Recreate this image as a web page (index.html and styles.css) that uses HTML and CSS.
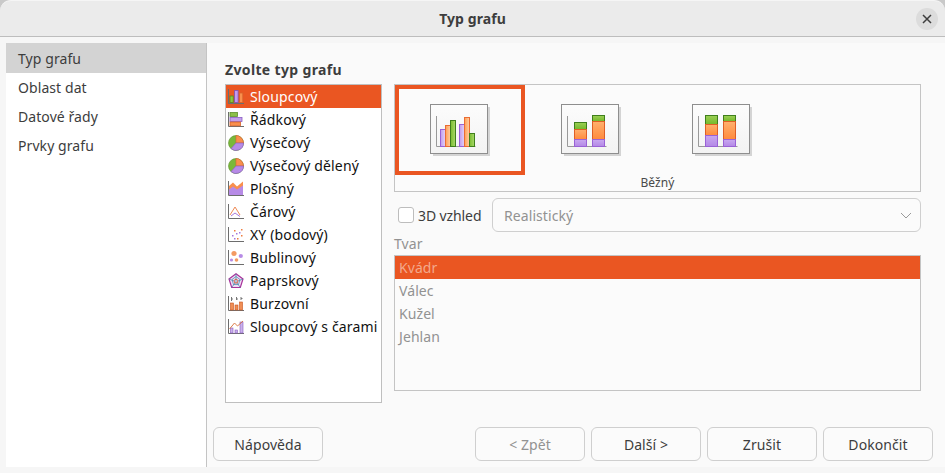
FILE: index.html
```html
<!DOCTYPE html>
<html lang="cs">
<head>
<meta charset="utf-8">
<title>Typ grafu</title>
<link rel="stylesheet" href="styles.css">
</head>
<body>
<svg class="defs" width="0" height="0" aria-hidden="true">
  <defs>
    <linearGradient id="gp" x1="0" x2="1" y1="0" y2="0"><stop offset="0" stop-color="#c09bec"/><stop offset="1" stop-color="#e3d2f7"/></linearGradient>
    <linearGradient id="go" x1="0" x2="1" y1="0" y2="0"><stop offset="0" stop-color="#ff9d55"/><stop offset="1" stop-color="#ffd0a5"/></linearGradient>
    <linearGradient id="gg" x1="0" x2="1" y1="0" y2="0"><stop offset="0" stop-color="#79bd2f"/><stop offset="1" stop-color="#a9d86a"/></linearGradient>
    <linearGradient id="vo" x1="0" x2="0" y1="0" y2="1"><stop offset="0" stop-color="#ffb06e"/><stop offset="1" stop-color="#ff8a3c"/></linearGradient>
    <linearGradient id="vg" x1="0" x2="0" y1="0" y2="1"><stop offset="0" stop-color="#9ccf55"/><stop offset="1" stop-color="#74b82a"/></linearGradient>
    <linearGradient id="vp" x1="0" x2="0" y1="0" y2="1"><stop offset="0" stop-color="#c9a8f0"/><stop offset="1" stop-color="#b388e6"/></linearGradient>
    <linearGradient id="fr" x1="0" x2="0" y1="0" y2="1"><stop offset="0" stop-color="#fcfcfc"/><stop offset="1" stop-color="#f3f3f3"/></linearGradient>
    <g id="frame">
      <rect x="3" y="3" width="57" height="49" fill="#d4d4d4"/>
      <rect x="0.500" y="0.500" width="57" height="49" fill="url(#fr)" stroke="#8e8e8e"/>
      <path d="M6.500 12v30.500h39" fill="none" stroke="#999"/>
    </g>
    <g id="pie">
      <circle cx="8" cy="8" r="7.500" fill="#79b83a" stroke="#5d8f2c" stroke-width=".6"/>
      <path d="M8 8V.5A7.500 7.500 0 0 1 15.500 8z" fill="#f98f4d" stroke="#d8622a" stroke-width=".6"/>
      <path d="M8 8h7.500A7.500 7.500 0 0 1 3 13.600z" fill="#b78be6" stroke="#8a5cc4" stroke-width=".6"/>
    </g>
    <path id="axes" d="M.500 0v14.500H16" fill="none" stroke="#6d6d6d"/>
  </defs>
</svg>
<div class="window">
  <header class="titlebar">
    <span class="title">Typ grafu</span>
    <span class="close"><svg width="10" height="10" viewBox="0 0 10 10"><path d="M1 1l8 8M9 1l-8 8" stroke="#3d3d3d" stroke-width="1.500" fill="none"/></svg></span>
  </header>
  <div class="body">
    <nav class="steps">
      <div class="step current">Typ grafu</div>
      <div class="step">Oblast dat</div>
      <div class="step">Datové řady</div>
      <div class="step">Prvky grafu</div>
    </nav>
    <main class="main">
      <h2 class="heading">Zvolte typ grafu</h2>
      <div class="content">
        <ul class="types">
          <li class="type selected"><svg class="ico" viewBox="0 0 16 16"><use href="#axes"/><rect x="2" y="7" width="3.200" height="6.500" fill="#8cc63f" stroke="#4f8a1f" stroke-width=".8"/><rect x="6.600" y="1.500" width="3.500" height="12" fill="#c39bee" stroke="#7d50b8" stroke-width=".8"/><rect x="11.600" y="4" width="3.200" height="9.500" fill="#f98f4d" stroke="#d8622a" stroke-width=".8"/></svg>Sloupcový</li>
          <li class="type"><svg class="ico" viewBox="0 0 16 16"><use href="#axes"/><rect x="2" y=".5" width="7.500" height="4" fill="#8cc04a" stroke="#5d8f2c" stroke-width=".8"/><rect x="2" y="5.500" width="12" height="4" fill="#c3a0ec" stroke="#8a5cc4" stroke-width=".8"/><rect x="2" y="10" width="10.500" height="3.800" fill="#f98f4d" stroke="#d8622a" stroke-width=".8"/></svg>Řádkový</li>
          <li class="type"><svg class="ico" viewBox="0 0 16 16"><use href="#pie"/></svg>Výsečový</li>
          <li class="type"><svg class="ico" viewBox="0 0 16 16"><use href="#pie"/></svg>Výsečový dělený</li>
          <li class="type"><svg class="ico" viewBox="0 0 16 16"><use href="#axes"/><path d="M1 6l4-3 4 4 6-5v12H1z" fill="#b78be6"/><path d="M1 5l4-3.500 4 4 6-5v4l-6 4-4-3-4 3z" fill="#f98f4d"/></svg>Plošný</li>
          <li class="type"><svg class="ico" viewBox="0 0 16 16"><use href="#axes"/><path d="M2 11l5-8 5 8" fill="none" stroke="#ee8a55"/><path d="M3 12l4-3 5 3.500" fill="none" stroke="#a678dc"/></svg>Čárový</li>
          <li class="type"><svg class="ico" viewBox="0 0 16 16"><use href="#axes"/><g fill="#ee7d3f"><rect x="6" y="3" width="1.500" height="1.500"/><rect x="13" y="2" width="1.500" height="1.500"/><rect x="13" y="8" width="1.500" height="1.500"/><rect x="9" y="11" width="1.500" height="1.500"/></g><g fill="#a678dc"><rect x="4" y="8" width="1.500" height="1.500"/><rect x="8" y="6" width="1.500" height="1.500"/><rect x="11" y="5" width="1.500" height="1.500"/><rect x="6" y="11" width="1.500" height="1.500"/></g></svg>XY (bodový)</li>
          <li class="type"><svg class="ico" viewBox="0 0 16 16"><use href="#axes"/><circle cx="6" cy="3.500" r="2.600" fill="#f39a62"/><circle cx="12.800" cy="6" r="2.100" fill="#b78be6"/><circle cx="3.500" cy="10" r="1.600" fill="#b78be6"/><circle cx="8.500" cy="10" r="1.800" fill="#f39a62"/></svg>Bublinový</li>
          <li class="type"><svg class="ico" viewBox="0 0 16 16"><path d="M8 .8l7 5.200-2.700 8.500H3.700L1 6z" fill="#f0dcf5" stroke="#a8329a" stroke-width="1.200"/><path d="M8 3.500l4 3-1.500 5h-5L4 6.500zM8 1v9M1 6l5 2M15 6l-5 2M3.700 14.500L7 10M12.300 14.500L9 10" fill="none" stroke="#3f86a8" stroke-width=".7"/><path d="M8 6l2 1.500-.8 2.500H6.800L6 7.500z" fill="none" stroke="#d0522a" stroke-width=".8"/></svg>Paprskový</li>
          <li class="type"><svg class="ico" viewBox="0 0 16 16"><use href="#axes"/><path d="M3.500 1v4M8.500 1v3M13 1v3M3.500 3h1.500M8.500 3h1.500M13 2.500h1.500" stroke="#777" fill="none"/><g fill="#f08e55" stroke="#c9541f" stroke-width=".6"><rect x="2.500" y="7" width="3" height="7"/><rect x="7" y="9" width="3" height="5"/><rect x="11.500" y="6" width="3" height="8"/></g></svg>Burzovní</li>
          <li class="type"><svg class="ico" viewBox="0 0 16 16"><use href="#axes"/><g fill="#c9b1ea" stroke="#8a5cc4" stroke-width=".6"><rect x="2.500" y="9" width="2.500" height="5"/><rect x="7" y="11" width="2.500" height="3"/><rect x="12" y="3" width="3" height="11"/></g><path d="M1.500 10l5-6 3 3 5.500-5" fill="none" stroke="#d8703a" stroke-width=".9"/></svg>Sloupcový s čarami</li>
        </ul>
        <div class="options">
          <section class="gallery">
            <div class="tiles">
              <div class="tile active">
                <svg class="chart" viewBox="0 0 60 52"><use href="#frame"/><g stroke-width="1"><rect x="10.500" y="25.500" width="5" height="17" fill="url(#gp)" stroke="#9a62d6"/><rect x="15.500" y="21.500" width="5" height="21" fill="url(#go)" stroke="#ea6c33"/><rect x="20.500" y="16.500" width="5" height="26" fill="url(#gg)" stroke="#3f7f1c"/><rect x="29.500" y="20.500" width="5" height="22" fill="url(#gp)" stroke="#9a62d6"/><rect x="34.500" y="13.500" width="5" height="29" fill="url(#go)" stroke="#ea6c33"/><rect x="39.500" y="29.500" width="5" height="13" fill="url(#gg)" stroke="#3f7f1c"/></g></svg>
              </div>
              <div class="tile">
                <svg class="chart" viewBox="0 0 60 52"><use href="#frame"/><rect x="13.500" y="18.500" width="12" height="7" fill="url(#vg)" stroke="#3f7f1c"/><rect x="13.500" y="25.500" width="12" height="10" fill="url(#vo)" stroke="#df5f26"/><rect x="13.500" y="35.500" width="12" height="7" fill="url(#vp)" stroke="#9a62d6"/><rect x="31.500" y="11.500" width="12" height="6" fill="url(#vg)" stroke="#3f7f1c"/><rect x="31.500" y="17.500" width="12" height="18" fill="url(#vo)" stroke="#df5f26"/><rect x="31.500" y="35.500" width="12" height="7" fill="url(#vp)" stroke="#9a62d6"/></svg>
              </div>
              <div class="tile">
                <svg class="chart" viewBox="0 0 60 52"><use href="#frame"/><rect x="13.500" y="11.500" width="12" height="9" fill="url(#vg)" stroke="#3f7f1c"/><rect x="13.500" y="20.500" width="12" height="11" fill="url(#vo)" stroke="#df5f26"/><rect x="13.500" y="31.500" width="12" height="11" fill="url(#vp)" stroke="#9a62d6"/><rect x="31.500" y="11.500" width="12" height="6" fill="url(#vg)" stroke="#3f7f1c"/><rect x="31.500" y="17.500" width="12" height="18" fill="url(#vo)" stroke="#df5f26"/><rect x="31.500" y="35.500" width="12" height="7" fill="url(#vp)" stroke="#9a62d6"/></svg>
              </div>
            </div>
            <div class="caption">Běžný</div>
          </section>
          <div class="look">
            <label class="check"><span class="box"></span>3D vzhled</label>
            <div class="select"><span>Realistický</span><svg width="12" height="7" viewBox="0 0 12 7"><path d="M1 1l5 5 5-5" fill="none" stroke="#9a9a9a"/></svg></div>
          </div>
          <div class="shape-label">Tvar</div>
          <ul class="shapes">
            <li class="shape selected">Kvádr</li>
            <li class="shape">Válec</li>
            <li class="shape">Kužel</li>
            <li class="shape">Jehlan</li>
          </ul>
        </div>
      </div>
      <footer class="actions">
        <button class="btn">Nápověda</button>
        <span class="spacer"></span>
        <button class="btn disabled">&lt; Zpět</button>
        <button class="btn">Další &gt;</button>
        <button class="btn">Zrušit</button>
        <button class="btn">Dokončit</button>
      </footer>
    </main>
  </div>
</div>
</body>
</html>
```

FILE: styles.css
```css
* { box-sizing: border-box; }
html, body { margin: 0; padding: 0; }
body {
  width: 945px;
  height: 473px;
  overflow: hidden;
  background: #f6f6f6;
  font-family: "Noto Sans", "Open Sans", sans-serif;
  font-size: 14px;
  letter-spacing: .08px;
  color: #3d3d3d;
}
.defs { position: absolute; }
ul { list-style: none; margin: 0; padding: 0; }

.window { height: 473px; display: flex; flex-direction: column; background: #c9c9c9; }
.titlebar {
  height: 37px;
  flex: none;
  display: flex;
  align-items: center;
  justify-content: center;
  position: relative;
  background: #ebebeb;
  border-top: 1px solid #f5f5f5;
  border-bottom: 1px solid #bdbdbd;
  border-radius: 11px 11px 0 0;
}
.title { font-weight: 700; color: #3d3d3d; }
.close {
  position: absolute;
  right: 7px;
  top: 7px;
  width: 22px;
  height: 22px;
  border-radius: 50%;
  background: #dcdcdc;
  display: flex;
  align-items: center;
  justify-content: center;
}
.body { flex: 1; display: flex; padding: 6px 0 6px 6px; min-height: 0; background: #f6f6f6; }

.steps {
  width: 201px;
  flex: none;
  background: #fff;
  border-right: 1px solid #c4c4c4;
}
.step { height: 29px; padding-left: 12px; display: flex; align-items: center; color: #3d3d3d; }
.step.current { height: 30px; background: #d3d3d3; }

.main { flex: 1; display: flex; flex-direction: column; padding: 0 12px 0 6px; background: #fafafa; min-width: 0; }
.heading { margin: 17px 0 0 12px; height: 24px; font-size: 14px; line-height: 20px; font-weight: 700; letter-spacing: .35px; color: #3d3d3d; }
.content { display: flex; gap: 12px; margin-left: 12px; height: 319px; }

.types { width: 157px; height: 319px; flex: none; background: #fff; border: 1px solid #bfbfbf; }
.type { height: 23px; display: flex; align-items: center; gap: 6px; padding-left: 2px; color: #111; white-space: nowrap; letter-spacing: .15px; }
.type.selected { background: #ea5622; color: #fff; }
.ico { width: 16px; height: 16px; flex: none; }

.options { width: 527px; flex: none; display: flex; flex-direction: column; }
.gallery { height: 108px; border: 1px solid #c4c4c4; background: #fbfbfb; display: flex; flex-direction: column; }
.tiles { display: flex; height: 90px; }
.tile { width: 131px; height: 90px; padding: 0 1px 0 0; display: flex; align-items: center; justify-content: center; border: 4px solid transparent; }
.tile.active { border-color: #ea5622; width: 130px; margin-right: 1px; padding-right: 0; }
.chart { width: 60px; height: 52px; display: block; flex: none; }
.caption { text-align: center; font-size: 12px; line-height: 16px; color: #4a4a4a; }

.look { display: flex; align-items: center; gap: 10px; margin-top: 6px; height: 34px; }
.check { display: flex; align-items: center; gap: 4px; width: 88px; flex: none; padding-left: 4px; color: #3d3d3d; white-space: nowrap; letter-spacing: -.1px; }
.box { width: 16px; height: 16px; border: 1px solid #bdbdbd; border-radius: 3px; background: #fff; flex: none; }
.select {
  flex: 1;
  height: 34px;
  border: 1px solid #cfcfcf;
  border-radius: 6px;
  background: #fbfbfb;
  color: #929292;
  display: flex;
  align-items: center;
  justify-content: space-between;
  padding: 0 8px 0 11px;
}
.shape-label { margin-top: 2px; height: 21px; line-height: 20px; color: #929292; }
.shapes { height: 136px; background: #fbfbfb; border: 1px solid #c4c4c4; }
.shape { height: 23px; padding-left: 4px; display: flex; align-items: center; color: #929292; }
.shape.selected { background: #ea5622; color: #f3a98c; }

.actions { display: flex; gap: 6px; margin-top: 24px; }
.spacer { width: 140px; }
.btn {
  width: 110px;
  height: 34px;
  border: 1px solid #cfcfcf;
  border-radius: 6px;
  background: #fbfbfb;
  font: inherit;
  letter-spacing: inherit;
  color: #3d3d3d;
  padding: 0;
}
.btn.disabled { color: #929292; }
```
